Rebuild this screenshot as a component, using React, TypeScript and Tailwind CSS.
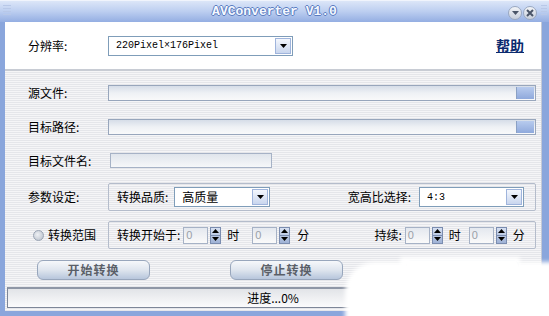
import React from 'react';

const cjk = "font-['Noto_Sans_CJK_SC','Noto_Sans',sans-serif]";
const stripes =
  'bg-[repeating-linear-gradient(to_bottom,#f5f5f7_0px,#f5f5f7_1px,#e5e6ea_1px,#e5e6ea_2px)]';

const Arrow = () => (
  <div className="w-[16px] self-stretch border border-[#9fb4dc] bg-gradient-to-b from-[#f4f7fd] to-[#c9d6ee] flex items-center justify-center">
    <svg width="7" height="4" viewBox="0 0 7 4">
      <path d="M0 0h7L3.5 4z" fill="#000" />
    </svg>
  </div>
);

const Select = ({ value, w, mono }: { value: string; w: string; mono?: boolean }) => (
  <div className={`${w} h-[20px] flex items-stretch border border-[#7f9db9] bg-white p-[1px]`}>
    <div
      className={`flex-1 flex items-center pl-[6px] text-black ${
        mono ? "font-['Liberation_Mono',monospace] text-[10px]" : `text-[12px] ${cjk}`
      }`}
    >
      {value}
    </div>
    <Arrow />
  </div>
);

const PathInput = () => (
  <div className="flex-1 h-[16px] flex border border-[#98a6bc] bg-gradient-to-b from-[#d6dde8] via-[#eef1f5] to-[#f9f9fa]">
    <div className="flex-1" />
    <div className="w-[18px] mr-[1px] my-[1px] border-l border-[#8aa0c4] bg-gradient-to-b from-[#b8cbee] to-[#8fa9dc]" />
  </div>
);

const Spinner = () => (
  <div className="flex items-center gap-[2px]">
    <div className="w-[25px] h-[17px] border border-[#a6b2c6] bg-gradient-to-b from-[#e4e8ef] to-[#fafafa] flex items-center pl-[2px] text-[11px] text-[#9aa0a8] font-['Liberation_Sans',sans-serif]">
      0
    </div>
    <div className="w-[11px] h-[17px] flex flex-col border border-[#7b8db0] bg-gradient-to-b from-[#d6e0f2] to-[#9fb2d6]">
      <div className="flex-1 flex items-center justify-center border-b border-[#7b8db0]">
        <svg width="7" height="4" viewBox="0 0 7 4">
          <path d="M3.5 0L7 4H0z" fill="#000" />
        </svg>
      </div>
      <div className="flex-1 flex items-center justify-center">
        <svg width="7" height="4" viewBox="0 0 7 4">
          <path d="M0 0h7L3.5 4z" fill="#000" />
        </svg>
      </div>
    </div>
  </div>
);

const Btn = ({ label, x }: { label: string; x: string }) => (
  <div
    className={`${x} w-[113px] h-[20px] rounded-[6px] border border-[#98a6bc] bg-gradient-to-b from-[#f6f8fb] via-[#dfe5ee] to-[#b7c6dc] flex items-center justify-center text-[12px] font-bold text-[#5a5f68] tracking-[1px] ${cjk}`}
  >
    {label}
  </div>
);

export default function App() {
  return (
    <div className="relative w-[549px] h-[316px] overflow-hidden bg-[#8aa6dc] flex flex-col select-none">
      {/* title bar */}
      <div className="h-[22px] relative flex items-center justify-center bg-gradient-to-b from-[#dce6f8] via-[#bccef0] to-[#94aee2] border-t border-[#f0f4fc]">
        <div className="absolute left-[3px] top-[4px] flex flex-col gap-[2px]">
          <div className="w-[8px] h-[1px] bg-[#b8c8e8]" />
          <div className="w-[8px] h-[1px] bg-[#b8c8e8]" />
          <div className="w-[8px] h-[1px] bg-[#b8c8e8]" />
          <div className="w-[8px] h-[1px] bg-[#b8c8e8]" />
        </div>
        <span className="font-['Liberation_Mono',monospace] font-bold text-[13px] text-[#f4f8ff] [text-shadow:-1px_0_#5a7cc0,1px_0_#5a7cc0,0_-1px_#5a7cc0,0_1px_#5a7cc0]">
          AVConverter V1.0
        </span>
        <div className="absolute right-[12px] top-[5px] flex gap-[1px]">
          <div className="w-[14px] h-[14px] rounded-full border border-[#9aa8c0] bg-gradient-to-b from-[#f2f4f8] to-[#c8cfdc] flex items-center justify-center">
            <svg width="7" height="4" viewBox="0 0 7 4">
              <path d="M0 0h7L3.5 4z" fill="#4a5568" />
            </svg>
          </div>
          <div className="w-[14px] h-[14px] rounded-full border border-[#9aa8c0] bg-gradient-to-b from-[#f2f4f8] to-[#c8cfdc] flex items-center justify-center">
            <svg width="8" height="8" viewBox="0 0 8 8">
              <path d="M1 1l6 6M7 1L1 7" stroke="#4a5568" strokeWidth="2" />
            </svg>
          </div>
        </div>
        <div className="absolute right-[2px] top-[4px] flex flex-col gap-[2px]">
          <div className="w-[6px] h-[1px] bg-[#b8c8e8]" />
          <div className="w-[6px] h-[1px] bg-[#b8c8e8]" />
          <div className="w-[6px] h-[1px] bg-[#b8c8e8]" />
          <div className="w-[6px] h-[1px] bg-[#b8c8e8]" />
        </div>
      </div>

      {/* body */}
      <div className="flex-1 ml-[5px] mr-[7px] mb-[5px] flex flex-col border-r border-[#c4cad6]">
        {/* top white section */}
        <div className="h-[49px] bg-white flex items-center pl-[23px] pr-[17px] border-b-2 border-[#c8ccd4]">
          <div className={`w-[80px] text-[12px] text-black ${cjk}`}>分辨率:</div>
          <Select value="220Pixel×176Pixel" w="w-[185px]" mono />
          <div className="flex-1" />
          <div className={`text-[14px] font-bold underline text-[#0b2a6e] ${cjk}`}>帮助</div>
        </div>

        {/* striped section */}
        <div className={`flex-1 flex flex-col ${stripes}`}>
          <div className="mt-[14px] h-[16px] flex items-center pl-[23px] pr-[5px]">
            <div className={`w-[80px] text-[12px] text-black ${cjk}`}>源文件:</div>
            <PathInput />
          </div>
          <div className="mt-[18px] h-[16px] flex items-center pl-[23px] pr-[5px]">
            <div className={`w-[80px] text-[12px] text-black ${cjk}`}>目标路径:</div>
            <PathInput />
          </div>
          <div className="mt-[18px] h-[15px] flex items-center pl-[23px]">
            <div className={`w-[82px] text-[12px] text-black ${cjk}`}>目标文件名:</div>
            <div className="w-[162px] h-[15px] border border-[#a6b2c6] bg-gradient-to-b from-[#e0e5ec] to-[#f6f7f9]" />
          </div>

          <div className="mt-[15px] h-[28px] flex items-center pl-[23px] pr-[5px]">
            <div className={`w-[80px] text-[12px] text-black ${cjk}`}>参数设定:</div>
            <div className="flex-1 h-[28px] flex items-center border border-[#b4bccb] rounded-[2px] pl-[8px] pr-[11px]">
              <span className={`text-[12px] text-black ${cjk}`}>转换品质:</span>
              <div className="ml-[6px]">
                <Select value="高质量" w="w-[96px]" />
              </div>
              <div className="flex-1" />
              <span className={`text-[12px] text-black mr-[8px] ${cjk}`}>宽高比选择:</span>
              <Select value="4:3" w="w-[105px]" mono />
            </div>
          </div>

          <div className="mt-[10px] h-[28px] flex items-center pl-[28px] pr-[5px]">
            <div className="w-[75px] flex items-center gap-[4px]">
              <div className="w-[11px] h-[11px] rounded-full border border-[#9aa4b4] bg-[radial-gradient(circle_at_40%_40%,#eef0f4,#b4bcc8)]" />
              <span className={`text-[12px] text-black ${cjk}`}>转换范围</span>
            </div>
            <div className={`flex-1 h-[28px] flex items-center border border-[#b4bccb] rounded-[2px] pl-[8px] text-[12px] text-black ${cjk}`}>
              <span>转换开始于:</span>
              <div className="ml-[3px]"><Spinner /></div>
              <span className="ml-[6px]">时</span>
              <div className="ml-[13px]"><Spinner /></div>
              <span className="ml-[7px]">分</span>
              <span className="ml-[65px]">持续:</span>
              <div className="ml-[3px]"><Spinner /></div>
              <span className="ml-[6px]">时</span>
              <div className="ml-[8px]"><Spinner /></div>
              <span className="ml-[6px]">分</span>
            </div>
          </div>

          <div className="mt-[11px] h-[20px] flex items-center">
            <Btn label="开始转换" x="ml-[32px]" />
            <Btn label="停止转换" x="ml-[80px]" />
            <Btn label="" x="ml-[63px]" />
          </div>

          {/* status bar */}
          <div className="mt-[7px] mx-[2px] h-[21px] border border-[#7d8698] border-t-2 border-t-[#8e96a6] bg-gradient-to-b from-[#e2e4e8] to-[#fbfbfc] flex items-center justify-center">
            <span className={`text-[12px] text-black ${cjk}`}>进度...0%</span>
          </div>
          <div className="flex-1" />
        </div>
      </div>

      {/* white watermark smear over the lower right */}
      <div className="absolute left-[345px] top-[262px] w-[230px] h-[70px] bg-white rounded-tl-[30px] rounded-bl-[10px] blur-[2px]" />
      <div className="absolute left-[400px] top-[257px] w-[120px] h-[10px] bg-white blur-[2px]" />
    </div>
  );
}
